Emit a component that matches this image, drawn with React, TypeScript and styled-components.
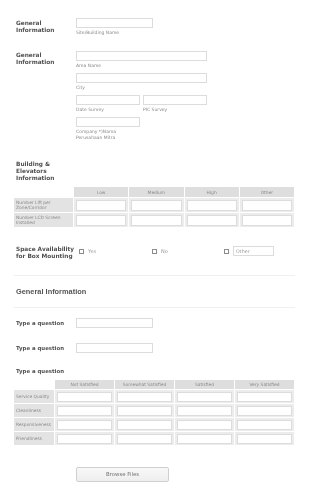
import React from "react";
import styled, { createGlobalStyle } from "styled-components";

const Global = createGlobalStyle`
  html, body {
    margin: 0;
    padding: 0;
    background: #fff;
  }
  body {
    font-family: "DejaVu Sans", Verdana, sans-serif;
    color: #555;
  }
  * { box-sizing: border-box; }
`;

const Page = styled.div`
  width: 310px;
  padding: 18px 15px 14px 14px;
  will-change: transform;
`;

const FieldRow = styled.div<{ $mt?: number; $col?: number }>`
  display: grid;
  grid-template-columns: ${(p) => p.$col ?? 62}px 1fr;
  margin-top: ${(p) => p.$mt ?? 0}px;
`;

const Label = styled.div<{ $pt?: number; $size?: number }>`
  padding-left: 2px;
  padding-top: ${(p) => p.$pt ?? 2}px;
  font-size: ${(p) => p.$size ?? 5.8}px;
  line-height: 7px;
  font-weight: bold;
  color: #505050;
  white-space: nowrap;
`;

const Fields = styled.div`
  display: flex;
  flex-direction: column;
`;

const Field = styled.div<{ $w: number }>`
  width: ${(p) => p.$w}px;
  margin-bottom: 4px;
`;

const Pair = styled.div`
  display: flex;
  gap: 3px;
`;

const TextBox = styled.input<{ $h?: number }>`
  display: block;
  width: 100%;
  height: ${(p) => p.$h ?? 10}px;
  border: 1px solid #dcdcdc;
  background: #fff;
  padding: 0 2px;
  margin: 0;
  outline: none;
  font-family: "DejaVu Sans", Verdana, sans-serif;
  font-size: 4.8px;
  color: #999;
  &::placeholder { color: #999; }
`;

const SubLabel = styled.div`
  margin-top: 2px;
  font-size: 4.5px;
  line-height: 6px;
  color: #8a8a8a;
`;

const BlockLabel = styled.div<{ $mt: number; $size?: number }>`
  margin-top: ${(p) => p.$mt}px;
  padding-left: 2px;
  font-size: ${(p) => p.$size ?? 5.8}px;
  line-height: 7px;
  font-weight: bold;
  color: #505050;
`;

const Matrix = styled.table<{ $mt: number; $first: number }>`
  width: 282px;
  margin-top: ${(p) => p.$mt}px;
  table-layout: fixed;
  border-collapse: separate;
  border-spacing: 1px;
  margin-left: -1px;
  col:first-child { width: ${(p) => p.$first}px; }
`;

const HeadCell = styled.th<{ $h: number }>`
  height: ${(p) => p.$h}px;
  background: #dedede;
  font-weight: normal;
  font-size: 4.4px;
  color: #8a8a8a;
  text-align: center;
  padding: 0;
`;

const BlankHead = styled.th`
  background: transparent;
  padding: 0;
`;

const RowHead = styled.td<{ $h: number }>`
  height: ${(p) => p.$h}px;
  background: #e3e3e3;
  font-size: 4.4px;
  line-height: 5.5px;
  color: #8a8a8a;
  padding: 0 2px;
  vertical-align: middle;
  white-space: nowrap;
  overflow: hidden;
`;

const Cell = styled.td`
  background: #ececec;
  padding: 1px 2px;
`;

const Options = styled.div`
  display: grid;
  grid-template-columns: 73px 72px 1fr;
  align-items: start;
  padding-left: 1px;
`;

const Option = styled.label`
  display: flex;
  align-items: center;
  gap: 4px;
  font-size: 5px;
  color: #9a9a9a;
  height: 10px;
`;

const Check = styled.span`
  display: inline-block;
  width: 5px;
  height: 5px;
  border: 0.6px solid #8a8a8a;
  border-radius: 0.5px;
  background: #fff;
`;

const OtherBox = styled.div`
  width: 41px;
`;

const Divider = styled.hr<{ $mt: number }>`
  margin: ${(p) => p.$mt}px 0 0 0;
  border: 0;
  border-top: 1px solid #f0f0f0;
  width: 281px;
`;

const Heading = styled.div`
  margin-top: 11px;
  margin-bottom: 11px;
  padding-left: 2px;
  font-family: "Liberation Sans", Arial, sans-serif;
  font-size: 7.4px;
  line-height: 9px;
  font-weight: bold;
  color: #555;
`;

const QuestionRow = styled.div<{ $mt: number }>`
  display: grid;
  grid-template-columns: 62px 77px;
  align-items: center;
  margin-top: ${(p) => p.$mt}px;
`;

const UploadRow = styled.div`
  padding-left: 62px;
  margin-top: 15px;
`;

const BrowseButton = styled.button`
  width: 93px;
  height: 15px;
  border: 1px solid #d0d0d0;
  border-radius: 2px;
  background: linear-gradient(#f8f8f8, #eeeeee);
  font-family: "DejaVu Sans", Verdana, sans-serif;
  font-size: 5.4px;
  color: #777;
  padding: 0;
  cursor: pointer;
`;

const levels = ["Low", "Medium", "High", "Other"];
const buildingRows = [
  ["Number Lift per", "Zone/Corridor"],
  ["Number LCD Screen", "Installed"],
];
const ratings = ["Not Satisfied", "Somewhat Satisfied", "Satisfied", "Very Satisfied"];
const services = ["Service Quality", "Cleanliness", "Responsiveness", "Friendliness"];

export default function App() {
  return (
    <>
      <Global />
      <Page>
        <FieldRow>
          <Label>General<br />Information</Label>
          <Fields>
            <Field $w={77}>
              <TextBox />
              <SubLabel>Site/Building Name</SubLabel>
            </Field>
          </Fields>
        </FieldRow>

        <FieldRow $mt={11}>
          <Label $pt={1}>General<br />Information</Label>
          <Fields>
            <Field $w={131}>
              <TextBox />
              <SubLabel>Area Name</SubLabel>
            </Field>
            <Field $w={131}>
              <TextBox />
              <SubLabel>City</SubLabel>
            </Field>
            <Pair>
              <Field $w={64}>
                <TextBox />
                <SubLabel>Date Survey</SubLabel>
              </Field>
              <Field $w={64}>
                <TextBox />
                <SubLabel>PIC Survey</SubLabel>
              </Field>
            </Pair>
            <Field $w={64}>
              <TextBox />
              <SubLabel>Company *)Nama<br />Perusahaan Mitra</SubLabel>
            </Field>
          </Fields>
        </FieldRow>

        <BlockLabel $mt={16}>Building &amp;<br />Elevators<br />Information</BlockLabel>
        <Matrix $mt={4} $first={59}>
          <colgroup>
            <col />
            <col />
            <col />
            <col />
            <col />
          </colgroup>
          <thead>
            <tr>
              <BlankHead />
              {levels.map((l) => (
                <HeadCell key={l} $h={10}>{l}</HeadCell>
              ))}
            </tr>
          </thead>
          <tbody>
            {buildingRows.map((r) => (
              <tr key={r[0]}>
                <RowHead $h={14}>{r[0]}<br />{r[1]}</RowHead>
                {levels.map((l) => (
                  <Cell key={l}><TextBox $h={11} /></Cell>
                ))}
              </tr>
            ))}
          </tbody>
        </Matrix>

        <FieldRow $mt={18} $col={64}>
          <Label $pt={0} $size={5.8}>Space Availability<br />for Box Mounting</Label>
          <Options>
            <Option><Check />Yes</Option>
            <Option><Check />No</Option>
            <Option>
              <Check />
              <OtherBox><TextBox placeholder="Other" /></OtherBox>
            </Option>
          </Options>
        </FieldRow>

        <Divider $mt={15} />
        <Heading>General Information</Heading>
        <Divider $mt={0} />

        <QuestionRow $mt={10}>
          <Label $pt={0} $size={5.4}>Type a question</Label>
          <TextBox $h={10} />
        </QuestionRow>
        <QuestionRow $mt={15}>
          <Label $pt={0} $size={5.4}>Type a question</Label>
          <TextBox $h={10} />
        </QuestionRow>
        <BlockLabel $mt={15} $size={5.4}>Type a question</BlockLabel>

        <Matrix $mt={4} $first={40}>
          <colgroup>
            <col />
            <col />
            <col />
            <col />
            <col />
          </colgroup>
          <thead>
            <tr>
              <BlankHead />
              {ratings.map((r) => (
                <HeadCell key={r} $h={9}>{r}</HeadCell>
              ))}
            </tr>
          </thead>
          <tbody>
            {services.map((s) => (
              <tr key={s}>
                <RowHead $h={13}>{s}</RowHead>
                {ratings.map((r) => (
                  <Cell key={r}><TextBox $h={10} /></Cell>
                ))}
              </tr>
            ))}
          </tbody>
        </Matrix>

        <UploadRow>
          <BrowseButton>Browse Files</BrowseButton>
        </UploadRow>
      </Page>
    </>
  );
}
